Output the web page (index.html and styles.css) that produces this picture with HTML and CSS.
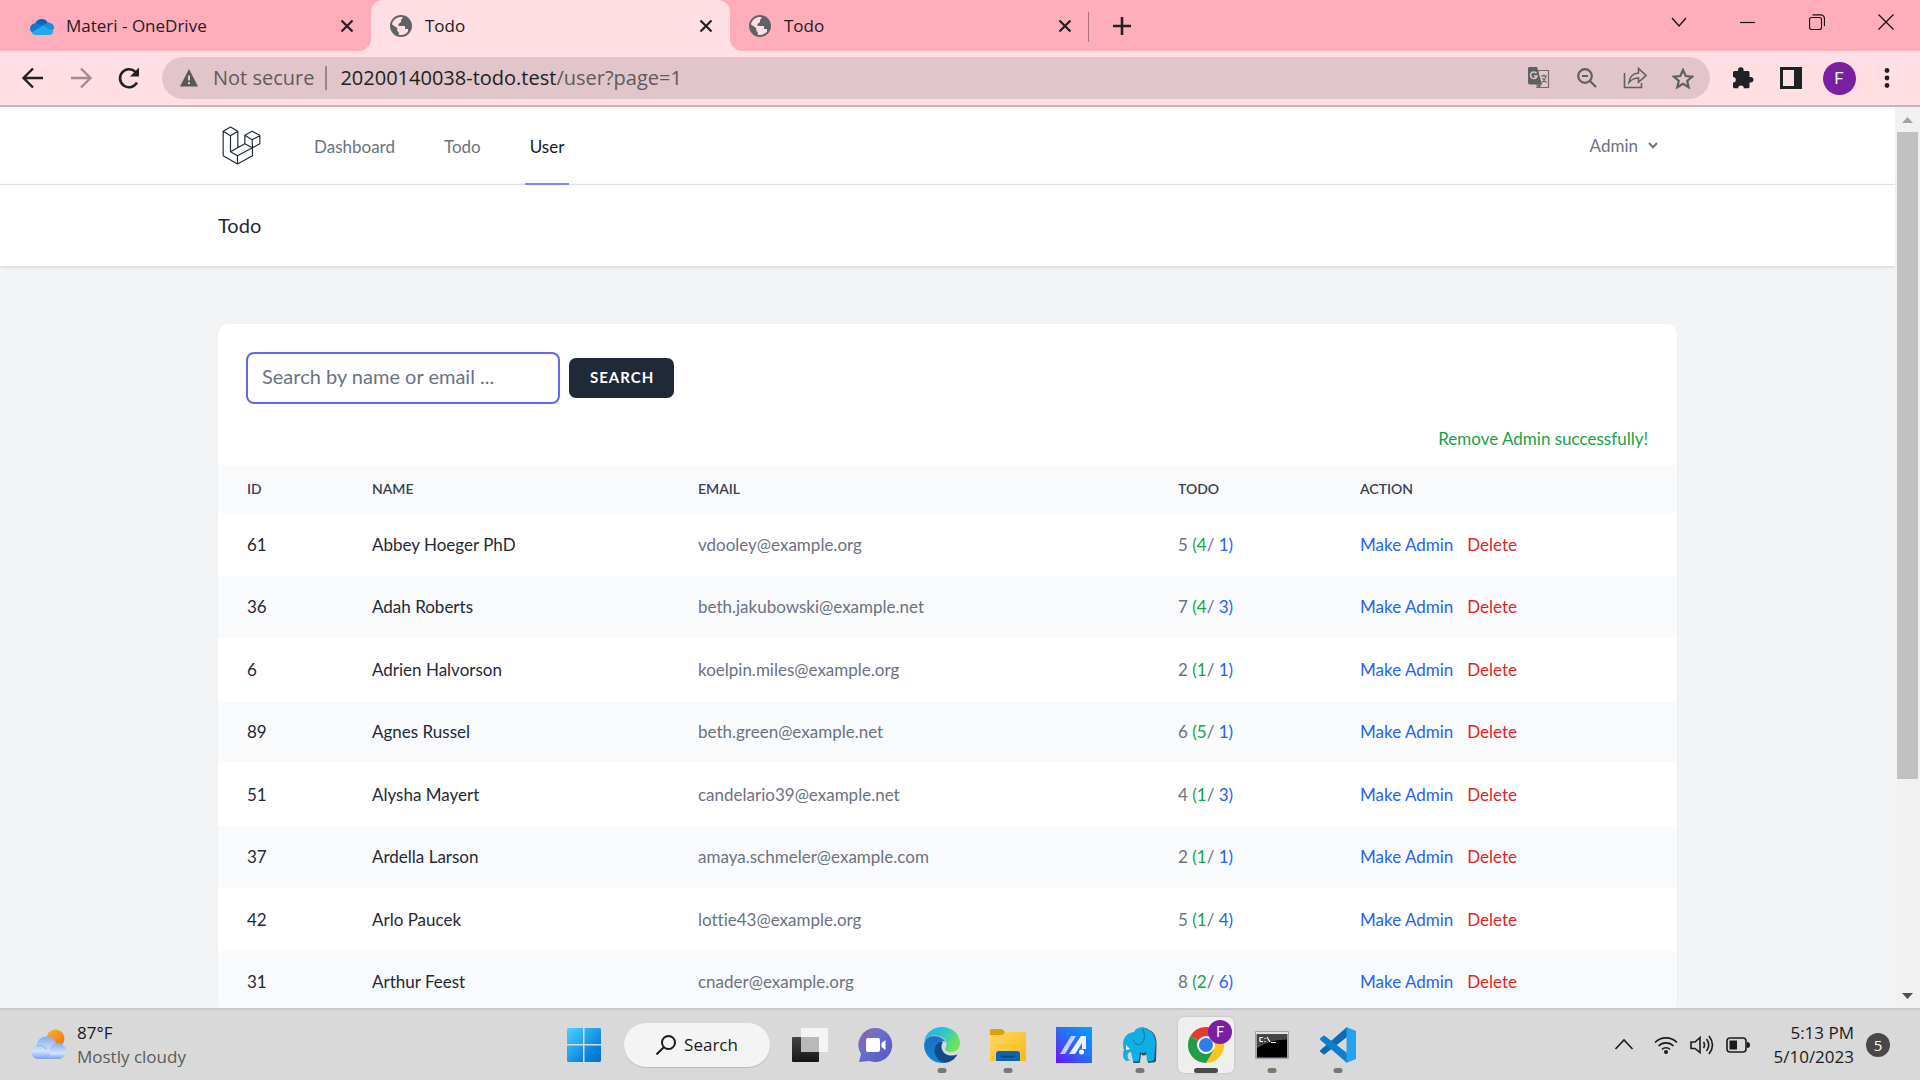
FILE: index.html
```html
<!DOCTYPE html>
<html lang="en">
<head>
<meta charset="utf-8">
<title>Todo</title>
<link rel="stylesheet" href="styles.css">
</head>
<body>
<svg class="sprites" aria-hidden="true">
  <symbol id="close" viewBox="0 0 14 14"><path d="M1.5 1.5l11 11M12.5 1.5l-11 11" stroke="#202124" stroke-width="2.2" fill="none"/></symbol>
  <symbol id="globe" viewBox="0 0 24 24"><circle cx="12" cy="12" r="11" fill="#5f6368"/><path d="M3 10.500C3.500 7 6 4 10 3.200c2-.5 3.500-.2 4 .3L12 6v2L9.500 10v2h6.500V15h3v2.500l-1.500 1.500C15 21 12 21.500 9.800 20.700V18.500l-1.600-2V14z" fill="#ffdee4"/><path d="M14 3l3 1.500-.5 3-3.500.5v2.500h4l1.500 3.500h3" fill="#5f6368"/></symbol>
</svg>

<header class="browser">
  <div class="tabstrip">
    <div class="tab">
      <svg class="favicon" viewBox="0 0 24 20"><path d="M5 8a7 7 0 0 1 13-1l-6 9H3z" fill="#0364b8"/><path d="M5 7.500c3-1 5 0 8 2l-6 8H5A4.800 4.800 0 0 1 5 7.500z" fill="#0f78d4"/><path d="M12 9.500l6-3a5.500 5.500 0 0 1 6 6l-4 4z" fill="#1490df"/><path d="M1.500 16.500L13 9.500l10.500 5.500a4.500 4.500 0 0 1-4 4H5a5 5 0 0 1-3.500-2.500z" fill="#28a8ea"/></svg>
      <span class="tab-title">Materi - OneDrive</span>
      <button class="tab-close" aria-label="Close tab"><svg class="x14"><use href="#close"/></svg></button>
    </div>
    <div class="tab tab-active">
      <svg class="favicon"><use href="#globe"/></svg>
      <span class="tab-title">Todo</span>
      <button class="tab-close" aria-label="Close tab"><svg class="x14"><use href="#close"/></svg></button>
    </div>
    <div class="tab tab-last">
      <svg class="favicon"><use href="#globe"/></svg>
      <span class="tab-title">Todo</span>
      <button class="tab-close" aria-label="Close tab"><svg class="x14"><use href="#close"/></svg></button>
    </div>
    <button class="new-tab" aria-label="New tab"><svg width="18" height="18" viewBox="0 0 18 18"><path d="M9 0v18M0 9h18" stroke="#202124" stroke-width="2.6"/></svg></button>
    <div class="window-controls">
      <button class="window-button" aria-label="Search tabs"><svg width="16" height="16" viewBox="0 0 16 16"><path d="M1 4l7 8 7-8" class="thin"/></svg></button>
      <button class="window-button" aria-label="Minimize"><svg width="16" height="16" viewBox="0 0 16 16"><path d="M0 8.500h15" class="thin"/></svg></button>
      <button class="window-button" aria-label="Restore"><svg width="16" height="16" viewBox="0 0 16 16"><rect x=".5" y="3.500" width="12" height="12" rx="2" class="thin"/><path d="M3.500 .8h8a4 4 0 0 1 4 4v7.500" class="thin"/></svg></button>
      <button class="window-button" aria-label="Close"><svg width="16" height="16" viewBox="0 0 16 16"><path d="M.5 .5l15 15M15.500 .5l-15 15" class="thin"/></svg></button>
    </div>
  </div>

  <div class="toolbar">
    <div class="tool-group">
      <button class="tool" aria-label="Back"><svg width="24" height="24" viewBox="0 0 24 24"><path d="M22 12H3M12 2.500L2.500 12l9.500 9.500" fill="none" stroke="#202124" stroke-width="2.400"/></svg></button>
      <button class="tool" aria-label="Forward"><svg width="24" height="24" viewBox="0 0 24 24"><path d="M2 12h19M12 2.500l9.500 9.500-9.500 9.500" fill="none" stroke="#9f8d91" stroke-width="2.400"/></svg></button>
      <button class="tool" aria-label="Reload"><svg width="24" height="24" viewBox="0 0 24 24"><path d="M20 16.500A9 9 0 1 1 18.500 6" fill="none" stroke="#202124" stroke-width="2.600"/><path d="M22 1.500v9h-9z" fill="#202124"/></svg></button>
    </div>
    <div class="omnibox">
      <svg width="18" height="18" viewBox="0 0 18 18"><path d="M9 0l9 17.500H0z" fill="#55575b"/><path d="M9 6.500v5M9 13v2.200" stroke="#e1c5ca" stroke-width="2"/></svg>
      <span class="insecure">Not secure</span>
      <span class="url"><span class="host">20200140038-todo.test</span>/user?page=1</span>
      <div class="tool-group omnibox-tools">
        <button class="tool" aria-label="Translate"><svg width="22" height="22" viewBox="0 0 22 22"><path d="M10 3.500h10.500v17H9z" fill="none" stroke="#76696c" stroke-width="1.200"/><path d="M1 0h8l5 17.500H2a2 2 0 0 1-2-2V1z" fill="#5f6064"/><path d="M9.300 17.500h4.500l-3 3.500z" fill="#5f6064"/><path d="M8.500 6.300A3.300 3.300 0 1 0 9 9H6" fill="none" stroke="#e1c5ca" stroke-width="1.500"/><path d="M13 9h6M16 7.500V9M18 9c-.5 3-2 5-4 6.500M14.500 11c1 2 2.500 3.500 4 4.500" fill="none" stroke="#5f6064" stroke-width="1.100"/></svg></button>
        <button class="tool" aria-label="Zoom"><svg width="20" height="20" viewBox="0 0 20 20"><circle cx="8" cy="8" r="6.800" class="grey"/><path d="M5 8h6M13 13l6 6" class="grey"/></svg></button>
        <button class="tool" aria-label="Share"><svg width="24" height="22" viewBox="0 0 24 22"><path d="M1.500 6v14.500h17V16" class="grey slim"/><path d="M6 15.500C6.500 9.500 10 6.500 15.500 6V1.500L23 8.500l-7.500 6.800V11C11 11 8.500 12.500 6 15.500z" class="grey slim"/></svg></button>
        <button class="tool" aria-label="Bookmark"><svg width="22" height="21" viewBox="0 0 22 21"><path d="M11 2l2.700 6 6.500.6-5 4.300 1.500 6.400L11 15.900l-5.700 3.400 1.500-6.400-5-4.300 6.500-.6z" class="grey"/></svg></button>
      </div>
    </div>
    <div class="tool-group">
      <button class="tool" aria-label="Extensions"><svg width="22" height="22" viewBox="0 0 22 22"><path d="M1 5.500A1.500 1.500 0 0 1 2.500 4H6V3a2.800 2.800 0 0 1 5.600 0v1h4A1.500 1.500 0 0 1 17.500 5.500V10h1.200a2.700 2.700 0 0 1 0 5.400H17.500v4.400a1.500 1.500 0 0 1-1.500 1.500h-4.200a2.800 2.800 0 0 0-5.600 0H2.500A1.500 1.500 0 0 1 1 19.800v-4.300a2.800 2.800 0 0 0 0-5.600z" fill="#202124"/></svg></button>
      <button class="tool" aria-label="Side panel"><svg width="22" height="22" viewBox="0 0 22 22"><path d="M0 0h22v22H0zM3 3v16h11V3z" fill="#202124" fill-rule="evenodd"/></svg></button>
      <button class="tool" aria-label="Profile"><span class="avatar">F</span></button>
      <button class="tool" aria-label="Menu"><svg width="6" height="20" viewBox="0 0 6 20"><g fill="#202124"><circle cx="3" cy="2.500" r="2.400"/><circle cx="3" cy="10" r="2.400"/><circle cx="3" cy="17.500" r="2.400"/></g></svg></button>
    </div>
  </div>
</header>

<div class="viewport">
  <div class="page">
    <nav class="nav">
      <div class="container nav-row">
        <a class="logo" href="#" aria-label="Home"><svg width="39" height="39" viewBox="66 77 116 117"><path d="M91 80l22 13-22 13-22-13zM69 93v73l43 25 45-25v-24M91 106v48l21 12 45-24M113 93v49M91 154l43-24M112 166v25M156 93l23 12v25l-22 12-23-12v-25zM134 105l22 13 23-12M156 118l1 24" fill="none" stroke="#1f2937" stroke-width="3.500" stroke-linejoin="round"/></svg></a>
        <div class="nav-links">
          <a class="nav-link" href="#">Dashboard</a>
          <a class="nav-link" href="#">Todo</a>
          <a class="nav-link nav-link-active" href="#">User</a>
        </div>
        <button class="account">Admin <svg width="10" height="7" viewBox="0 0 10 7"><path d="M1 1l4 4.200L9 1" fill="none" stroke="#6b7280" stroke-width="2"/></svg></button>
      </div>
    </nav>
    <header class="heading"><div class="container"><h1 class="title">Todo</h1></div></header>

    <main class="container main">
      <section class="card">
        <form class="search">
          <input class="search-input" type="text" aria-label="Search by name or email" placeholder="Search by name or email ...">
          <button class="search-button" type="button">SEARCH</button>
        </form>
        <p class="notice">Remove Admin successfully!</p>
        <table class="users">
          <colgroup><col class="col-id"><col class="col-name"><col class="col-email"><col class="col-todo"><col></colgroup>
          <thead><tr><th>ID</th><th>NAME</th><th>EMAIL</th><th>TODO</th><th>ACTION</th></tr></thead>
          <tbody>
            <tr><td class="strong">61</td><td class="strong">Abbey Hoeger PhD</td><td>vdooley@example.org</td><td>5 <span class="done">(4</span>/ <span class="open">1)</span></td><td><button class="action open">Make Admin</button><button class="action danger">Delete</button></td></tr>
            <tr><td class="strong">36</td><td class="strong">Adah Roberts</td><td>beth.jakubowski@example.net</td><td>7 <span class="done">(4</span>/ <span class="open">3)</span></td><td><button class="action open">Make Admin</button><button class="action danger">Delete</button></td></tr>
            <tr><td class="strong">6</td><td class="strong">Adrien Halvorson</td><td>koelpin.miles@example.org</td><td>2 <span class="done">(1</span>/ <span class="open">1)</span></td><td><button class="action open">Make Admin</button><button class="action danger">Delete</button></td></tr>
            <tr><td class="strong">89</td><td class="strong">Agnes Russel</td><td>beth.green@example.net</td><td>6 <span class="done">(5</span>/ <span class="open">1)</span></td><td><button class="action open">Make Admin</button><button class="action danger">Delete</button></td></tr>
            <tr><td class="strong">51</td><td class="strong">Alysha Mayert</td><td>candelario39@example.net</td><td>4 <span class="done">(1</span>/ <span class="open">3)</span></td><td><button class="action open">Make Admin</button><button class="action danger">Delete</button></td></tr>
            <tr><td class="strong">37</td><td class="strong">Ardella Larson</td><td>amaya.schmeler@example.com</td><td>2 <span class="done">(1</span>/ <span class="open">1)</span></td><td><button class="action open">Make Admin</button><button class="action danger">Delete</button></td></tr>
            <tr><td class="strong">42</td><td class="strong">Arlo Paucek</td><td>lottie43@example.org</td><td>5 <span class="done">(1</span>/ <span class="open">4)</span></td><td><button class="action open">Make Admin</button><button class="action danger">Delete</button></td></tr>
            <tr><td class="strong">31</td><td class="strong">Arthur Feest</td><td>cnader@example.org</td><td>8 <span class="done">(2</span>/ <span class="open">6)</span></td><td><button class="action open">Make Admin</button><button class="action danger">Delete</button></td></tr>
          </tbody>
        </table>
      </section>
    </main>
  </div>
  <div class="scrollbar">
    <svg class="scroll-arrow" viewBox="0 0 25 25"><path d="M7 16l5.500-6 5.500 6z" fill="#a3a3a3"/></svg>
    <div class="scroll-track"><div class="scroll-thumb"></div></div>
    <svg class="scroll-arrow" viewBox="0 0 25 25"><path d="M7 10l5.500 6 5.500-6z" fill="#505050"/></svg>
  </div>
</div>

<footer class="taskbar">
  <div class="weather">
    <svg width="36" height="32" viewBox="0 0 36 32">
      <defs>
        <linearGradient id="sun" x1="0" y1="0" x2="1" y2="1"><stop offset="0" stop-color="#f2b632"/><stop offset="1" stop-color="#f0700f"/></linearGradient>
        <linearGradient id="cloud" x1="0" y1="0" x2="0" y2="1"><stop offset="0" stop-color="#86aaf0"/><stop offset=".65" stop-color="#d3e3fb"/><stop offset="1" stop-color="#7ba0ea"/></linearGradient>
      </defs>
      <circle cx="25.500" cy="9.500" r="9" fill="url(#sun)"/>
      <path d="M7 30a7 7 0 0 1-.5-13.500C7 10.500 12 7.500 16.500 7.500c5 0 8.500 3 9.500 7A8 8 0 0 1 29 30z" fill="url(#cloud)"/>
      <path d="M20 21c1-5 4-7 8-7a8 8 0 0 1 0 16h-9" fill="url(#cloud)"/>
      <path d="M7 17c4-1 8 0 9 3" fill="none" stroke="#8aaceb" stroke-width="1.200"/>
    </svg>
    <div class="weather-text"><span>87°F</span><span class="muted">Mostly cloudy</span></div>
  </div>

  <div class="apps">
    <button class="app" aria-label="Start"><svg width="36" height="36" viewBox="0 0 36 36"><defs><linearGradient id="win" x1="0" y1="0" x2="1" y2="1"><stop offset="0" stop-color="#4cd2ff"/><stop offset=".7" stop-color="#0b84dc"/><stop offset="1" stop-color="#0070cc"/></linearGradient></defs><path d="M2 1h15v16H1V2zM18.500 1H34l1 1v15H18.500zM1 18.500h16V35H2l-1-1zM18.500 18.500H35V34l-1 1H18.500z" fill="url(#win)"/></svg></button>
    <button class="search-pill"><svg width="20" height="20" viewBox="0 0 20 20"><circle cx="12.500" cy="7.500" r="6.500" fill="none" stroke="#1b1b1b" stroke-width="2"/><path d="M8 12l-7.500 7.500" stroke="#1b1b1b" stroke-width="2"/></svg>Search</button>
    <button class="app" aria-label="Task view"><svg width="36" height="36" viewBox="0 0 36 36"><defs><linearGradient id="dark" x1="0" y1="0" x2="0" y2="1"><stop offset="0" stop-color="#444"/><stop offset="1" stop-color="#151515"/></linearGradient></defs><rect x="0" y="10" width="27" height="25" rx="1" fill="url(#dark)"/><rect x="9" y="1" width="27" height="24" rx="1" fill="#f4f4f4"/><rect x="9" y="10" width="18" height="15" fill="#b9b9b9"/></svg></button>
    <button class="app" aria-label="Chat"><svg width="36" height="36" viewBox="0 0 36 36"><defs><linearGradient id="chat" x1="0" y1="0" x2="1" y2="1"><stop offset="0" stop-color="#9a62a4"/><stop offset=".4" stop-color="#6a6fc8"/><stop offset="1" stop-color="#5457c4"/></linearGradient></defs><path d="M18 1a17 17 0 1 1-6.500 33L1 35l2-8A17 17 0 0 1 18 1z" fill="url(#chat)"/><rect x="8" y="11" width="14" height="14" rx="2" fill="#fff"/><path d="M23.500 16l4-3v10l-4-3z" fill="#fff"/></svg></button>
    <button class="app" aria-label="Edge"><svg width="36" height="36" viewBox="0 0 36 36"><defs><linearGradient id="e1" x1="0" y1="0" x2="1" y2=".5"><stop offset="0" stop-color="#2aaee8"/><stop offset=".5" stop-color="#2bc3d2"/><stop offset="1" stop-color="#6ee552"/></linearGradient><linearGradient id="e2" x1="0" y1="0" x2="0" y2="1"><stop offset="0" stop-color="#1b6fc4"/><stop offset="1" stop-color="#0d86dc"/></linearGradient></defs><path d="M0 16C1 6 9 0 18 0c11 0 18 8 18 16 0 6-4 9-9 9-4 0-6-1.500-6-3 0-1 1.500-2 1.500-4.500C22.500 12 17 8.500 11 8.500 6 8.500 2 11 0 16z" fill="url(#e1)"/><path d="M0 18C1 12 5 9 10 9c6 0 10 3 11.500 6-2-1.500-5-1-7 2C10 23 14 33 24 35A18 18 0 0 1 0 18z" fill="url(#e2)"/><path d="M14.500 16C7 20 11 36 22 35.500c5-.5 9-3.500 11.500-8-8 3-16-.5-16-8 0-2 .5-3 1.500-4.500-2-.5-3 0-4.500 1z" fill="#114a8b"/></svg><span class="dot"></span></button>
    <button class="app" aria-label="File Explorer"><svg width="36" height="36" viewBox="0 0 36 36"><defs><linearGradient id="fold" x1="0" y1="0" x2="1" y2="1"><stop offset="0" stop-color="#ffd766"/><stop offset="1" stop-color="#fcb913"/></linearGradient></defs><path d="M0 3q0-1 1-1h11l3 3v4H0z" fill="#e0a106"/><path d="M0 8h12l4-3h19q1 0 1 1v27q0 1-1 1H0z" fill="url(#fold)"/><path d="M6 34v-7q0-3 3-3h18q3 0 3 3v7z" fill="#0c64b4"/><path d="M11 29.500h14" stroke="#0a3f7c" stroke-width="1.500"/></svg><span class="dot"></span></button>
    <button class="app" aria-label="MyASUS"><svg width="36" height="36" viewBox="0 0 36 36"><defs><linearGradient id="asus" x1="0" y1="1" x2="1" y2="0"><stop offset="0" stop-color="#6a14f5"/><stop offset=".5" stop-color="#2a6cf8"/><stop offset="1" stop-color="#00a2ff"/></linearGradient></defs><path d="M0 0h36v36H0z" fill="url(#asus)"/><path d="M4 27L15 9h5L9 27z" fill="#c9d0ff"/><path d="M13 27L25 9h5v13h-4v-6l-7 11z" fill="#eef2ff"/><circle cx="25.500" cy="25" r="2.500" fill="#fff"/></svg></button>
    <button class="app" aria-label="Laragon"><svg width="36" height="36" viewBox="0 0 36 36"><path d="M13 6c2-5 10-7 14-3 6 2 8 9 7.500 16L34 34q-1 2-4 1.500l-4 .5-1-9q-4 3-6 0l-1 8.500q-4 1-7 0z" fill="#324f5c"/><path d="M12 5c2-5 10-6 13-3 6 2 9 9 8.500 16L32 33q-2 2-7 1l-1-9q-4 2-6 0l-1 9q-3 1-6 0L9 25q-3 0-3.500 4 0 3 2.500 4-3 2-5 0C0 30 1 25 2 23-1 14 3 6 12 5z" fill="#0fafe5"/><path d="M20 2c4 4 3 12-1 15-4 2-7-1-7.500-4" fill="none" stroke="#0a86b8" stroke-width="1.200"/><path d="M4 18l4 4-4 1z" fill="#fff"/></svg><span class="dot"></span></button>
    <button class="app app-active" aria-label="Chrome"><svg width="36" height="36" viewBox="0 0 36 36"><path d="M18 18L2.400 9A18 18 0 0 1 33.600 9z" fill="#e33b2e"/><path d="M18 18l-.1 18A18 18 0 0 1 2.400 9z" fill="#259b48"/><path d="M18 9h15.600A18 18 0 0 1 18 36l8-14z" fill="#fcc31e"/><path d="M2.400 9L10.500 22.500l7.500-4.500 8 4.500L18 36" fill="#259b48"/><path d="M18 9h15.600L26 22.500z" fill="#fcc31e"/><circle cx="18" cy="18" r="9" fill="#fff"/><circle cx="18" cy="18" r="7" fill="#2f7cf0"/></svg><span class="app-badge">F</span><span class="dot dot-wide"></span></button>
    <button class="app" aria-label="Command Prompt"><svg width="36" height="36" viewBox="0 0 36 36"><rect x="1" y="4" width="34" height="28" rx="1" fill="#9aa4ae"/><rect x="2" y="5" width="32" height="2" fill="#dbe2ea"/><rect x="3" y="7.500" width="30" height="23" fill="#000"/><path d="M3 7.500h30v5Q15 13 3 21z" fill="#444"/><path d="M9 10.500H6v4h3M11 11v1M11 14v1M13 10l3 5M17 15.500h5" fill="none" stroke="#fff" stroke-width="1.200"/></svg><span class="dot"></span></button>
    <button class="app" aria-label="Visual Studio Code"><svg width="36" height="36" viewBox="0 0 36 36"><path d="M27 0L27 10 5 27q-1 1-2 0L.5 25q-1-1 0-2z" fill="#0b6cb0"/><path d="M27 36V26L5 9q-1-1-2 0L.5 11q-1 1 0 2z" fill="#0c80cc"/><path d="M26.500 0L36 4v28l-9.500 4z" fill="#27a0f0"/></svg><span class="dot"></span></button>
  </div>

  <div class="tray">
    <svg width="20" height="36" viewBox="0 0 20 36"><path d="M1.500 22L10 13l8.500 9" class="ink"/></svg>
    <svg width="24" height="24" viewBox="0 0 24 24"><path d="M1 9.500a15.500 15.500 0 0 1 22 0M4.500 13a10.500 10.500 0 0 1 15 0M8 16.500a5.600 5.600 0 0 1 8 0" class="ink"/><circle cx="12" cy="19" r="2" fill="#1b1b1b"/></svg>
    <svg width="24" height="24" viewBox="0 0 24 24"><path d="M1 9v6.500h4l5 4V4.500L5 9zM13.500 9q2 3 0 6M16.500 6q4.500 6 0 12M19 3q7 9 0 18" class="ink"/></svg>
    <svg width="24" height="24" viewBox="0 0 24 24"><rect x="1" y="5" width="19" height="14" rx="3" class="ink"/><path d="M3.500 7.500H11v9H3.500z" fill="#1b1b1b"/><path d="M21 9q3 0 3 3t-3 3z" fill="#1b1b1b"/></svg>
    <div class="clock"><span>5:13 PM</span><span>5/10/2023</span></div>
    <span class="count">5</span>
  </div>
</footer>
</body>
</html>
```
FILE: styles.css
```css
* { box-sizing: border-box; }

body {
  margin: 0;
  height: 100vh;
  display: flex;
  flex-direction: column;
  overflow: hidden;
  background: #f3f4f6;
  color: #202124;
  font: 17px/24px "Open Sans", "Noto Sans", sans-serif;
}

button {
  padding: 0;
  border: 0;
  background: none;
  color: inherit;
  font: inherit;
}

a { color: inherit; text-decoration: none; }
svg { display: block; flex: none; }
.sprites { position: absolute; width: 0; height: 0; }

/* Browser frame */
.browser { flex: none; border-bottom: 2px solid #ccb2b8; background: #ffdee4; }
.tabstrip { display: flex; height: 51px; padding-left: 12px; background: #ffadbb; }

.tab {
  position: relative;
  flex: 0 1 359px;
  display: flex;
  align-items: center;
  gap: 12px;
  padding: 0 17px 0 18px;
}
.tab-active { background: #ffdee4; border-radius: 12px 12px 0 0; }
.tab-active::before,
.tab-active::after {
  content: "";
  position: absolute;
  bottom: 0;
  width: 12px;
  height: 12px;
}
.tab-active::before { right: 100%; background: radial-gradient(circle at 0 0, #ffadbb 12px, #ffdee4 12px); }
.tab-active::after { left: 100%; background: radial-gradient(circle at 100% 0, #ffadbb 12px, #ffdee4 12px); }
.tab-last::after {
  content: "";
  position: absolute;
  right: 0;
  top: 12px;
  width: 1px;
  height: 30px;
  background: #a8757e;
}
.favicon { width: 24px; height: 24px; }
.tab-title { flex: 1; }
.tab-close { width: 14px; height: 14px; }
.x14 { width: 14px; height: 14px; }
.new-tab { display: grid; place-items: center; width: 66px; }
.window-controls { display: flex; margin-left: auto; padding-bottom: 8px; }
.window-button { display: grid; place-items: center; width: 69px; }
.thin { fill: none; stroke: #111; stroke-width: 1.2; }

.toolbar { display: flex; align-items: center; gap: 9px; height: 54px; padding: 0 9px; }
.tool-group { display: flex; }
.tool { display: grid; place-items: center; width: 48px; height: 40px; }
.grey { fill: none; stroke: #5f6064; stroke-width: 2.2; }
.slim { stroke-width: 1.6; }
.omnibox {
  flex: 1;
  display: flex;
  align-items: center;
  height: 42px;
  padding: 0 3px 0 18px;
  border-radius: 21px;
  background: #e1c5ca;
  color: #5f5a5e;
  font-size: 20px;
}
.insecure { padding: 0 11px 0 15px; border-right: 2px solid #9c888c; }
.url { padding-left: 13px; }
.host { color: #202124; }
.omnibox-tools { margin-left: auto; }
.avatar {
  display: grid;
  place-items: center;
  width: 33px;
  height: 33px;
  border-radius: 50%;
  background: #7b1fa2;
  color: #fff;
  font: 17px "Roboto", sans-serif;
}

/* Page */
.viewport { flex: 1; min-height: 0; display: flex; }
.page {
  flex: 1;
  overflow: hidden;
  background: #f3f4f6;
  font-family: "Lato", sans-serif;
  font-variant-ligatures: none;
}
.container { width: 77%; max-width: 1459px; margin: 0 auto; }
.nav { background: #fff; border-bottom: 1px solid #e9ebee; }
.nav-row { display: flex; height: 77px; padding-left: 4px; }
.logo { display: flex; align-items: center; padding-bottom: 1px; }
.nav-links { display: flex; gap: 39px; margin: 0 auto 0 48px; }
.nav-link {
  display: flex;
  align-items: center;
  height: 78px;
  padding: 4px 5px 0;
  border-bottom: 2px solid transparent;
  color: #6b7280;
}
.nav-link-active { border-color: #818cf8; color: #111827; }
.account { display: flex; align-items: center; gap: 10px; padding-right: 19px; color: #6b7280; }
.heading {
  position: relative;
  padding: 28px 0 29px;
  background: #fff;
  box-shadow: 0 1px 4px rgba(0, 0, 0, .15);
}
.title { margin: 0; color: #1f2937; font-size: 20px; font-weight: 400; line-height: 24px; }
.main { padding-top: 58px; }
.card { overflow: hidden; border-radius: 10px; background: #fff; box-shadow: 0 1px 3px rgba(0, 0, 0, .05); }
.search { display: flex; align-items: center; gap: 9px; padding: 28px 28px 0; }
.search-input {
  width: 314px;
  height: 52px;
  padding: 0 14px 4px;
  border: 2px solid #6366f1;
  border-radius: 8px;
  outline: 0;
  background: #fff;
  font: 20px "Lato", sans-serif;
}
.search-input::placeholder { color: #6b7280; opacity: 1; }
.search-button {
  height: 40px;
  padding: 0 20px 2px 21px;
  border-radius: 7px;
  background: #1f2937;
  color: #fff;
  font-size: 15px;
  font-weight: 700;
  letter-spacing: 1px;
}
.notice { margin: 0; padding: 23px 29px 14px; color: #16a34a; text-align: right; }

.users { width: 100%; table-layout: fixed; border-collapse: collapse; color: #6b7280; }
.col-id { width: 125px; }
.col-name { width: 326px; }
.col-email { width: 480px; }
.col-todo { width: 182px; }
.users th,
.users td { padding: 0 0 0 29px; text-align: left; }
.users th { height: 48px; background: #f9fafb; color: #374151; font-size: 14px; font-weight: 600; }
.users td { height: 63px; }
.users tr:nth-child(even) td { height: 62px; background: #f9fafb; }
.users .strong { color: #1f2937; }
.done { color: #16a34a; }
.open { color: #2563eb; }
.danger { color: #dc2626; }
.action { margin-right: 14px; }

.scrollbar { flex: none; display: flex; flex-direction: column; width: 25px; background: #f1f1f1; }
.scroll-arrow { width: 25px; height: 25px; }
.scroll-track { flex: 1; padding: 0 2px; }
.scroll-thumb { height: 76%; background: #c1c1c1; }

/* Taskbar */
.taskbar {
  flex: none;
  display: grid;
  grid-template-columns: 1fr auto 1fr;
  height: 72px;
  padding-left: 2px;
  border-top: 2px solid #c9c9c9;
  background: #d9d9d9;
  color: #1b1b1b;
}
.weather { display: flex; align-items: center; gap: 11px; padding-left: 28px; }
.weather-text,
.clock { display: flex; flex-direction: column; }
.muted { color: #5b5b5b; }
.apps { display: flex; align-items: center; }
.app { position: relative; display: grid; place-items: center; width: 66px; height: 56px; }
.app-active { width: 56px; margin: 0 5px; border-radius: 6px; background: #efefee; box-shadow: 0 0 2px rgba(0, 0, 0, .2); }
.app-badge {
  position: absolute;
  right: 2px;
  top: 3px;
  display: grid;
  place-items: center;
  width: 24px;
  height: 24px;
  border-radius: 50%;
  background: #7b1fa2;
  color: #fff;
  font: 14px "Roboto", sans-serif;
}
.dot {
  position: absolute;
  left: 50%;
  bottom: 0;
  width: 9px;
  height: 5px;
  border-radius: 3px;
  background: #777;
  transform: translateX(-50%);
}
.dot-wide { width: 24px; background: #4a4a4a; }
.search-pill {
  display: flex;
  align-items: center;
  justify-content: center;
  gap: 8px;
  width: 146px;
  height: 44px;
  margin: 0 7px;
  border-radius: 22px;
  background: #f4f4f4;
  box-shadow: 0 1px 1px rgba(0, 0, 0, .15);
}
.tray { display: flex; align-items: center; justify-content: flex-end; gap: 12px; padding-right: 30px; }
.ink { fill: none; stroke: #1b1b1b; stroke-width: 1.6; }
.tray svg:first-child { margin-right: 8px; }
.clock { margin-left: 11px; text-align: right; }
.count {
  display: grid;
  place-items: center;
  width: 24px;
  height: 24px;
  border-radius: 50%;
  background: #4a4845;
  color: #fff;
  font-size: 15px;
}
```
